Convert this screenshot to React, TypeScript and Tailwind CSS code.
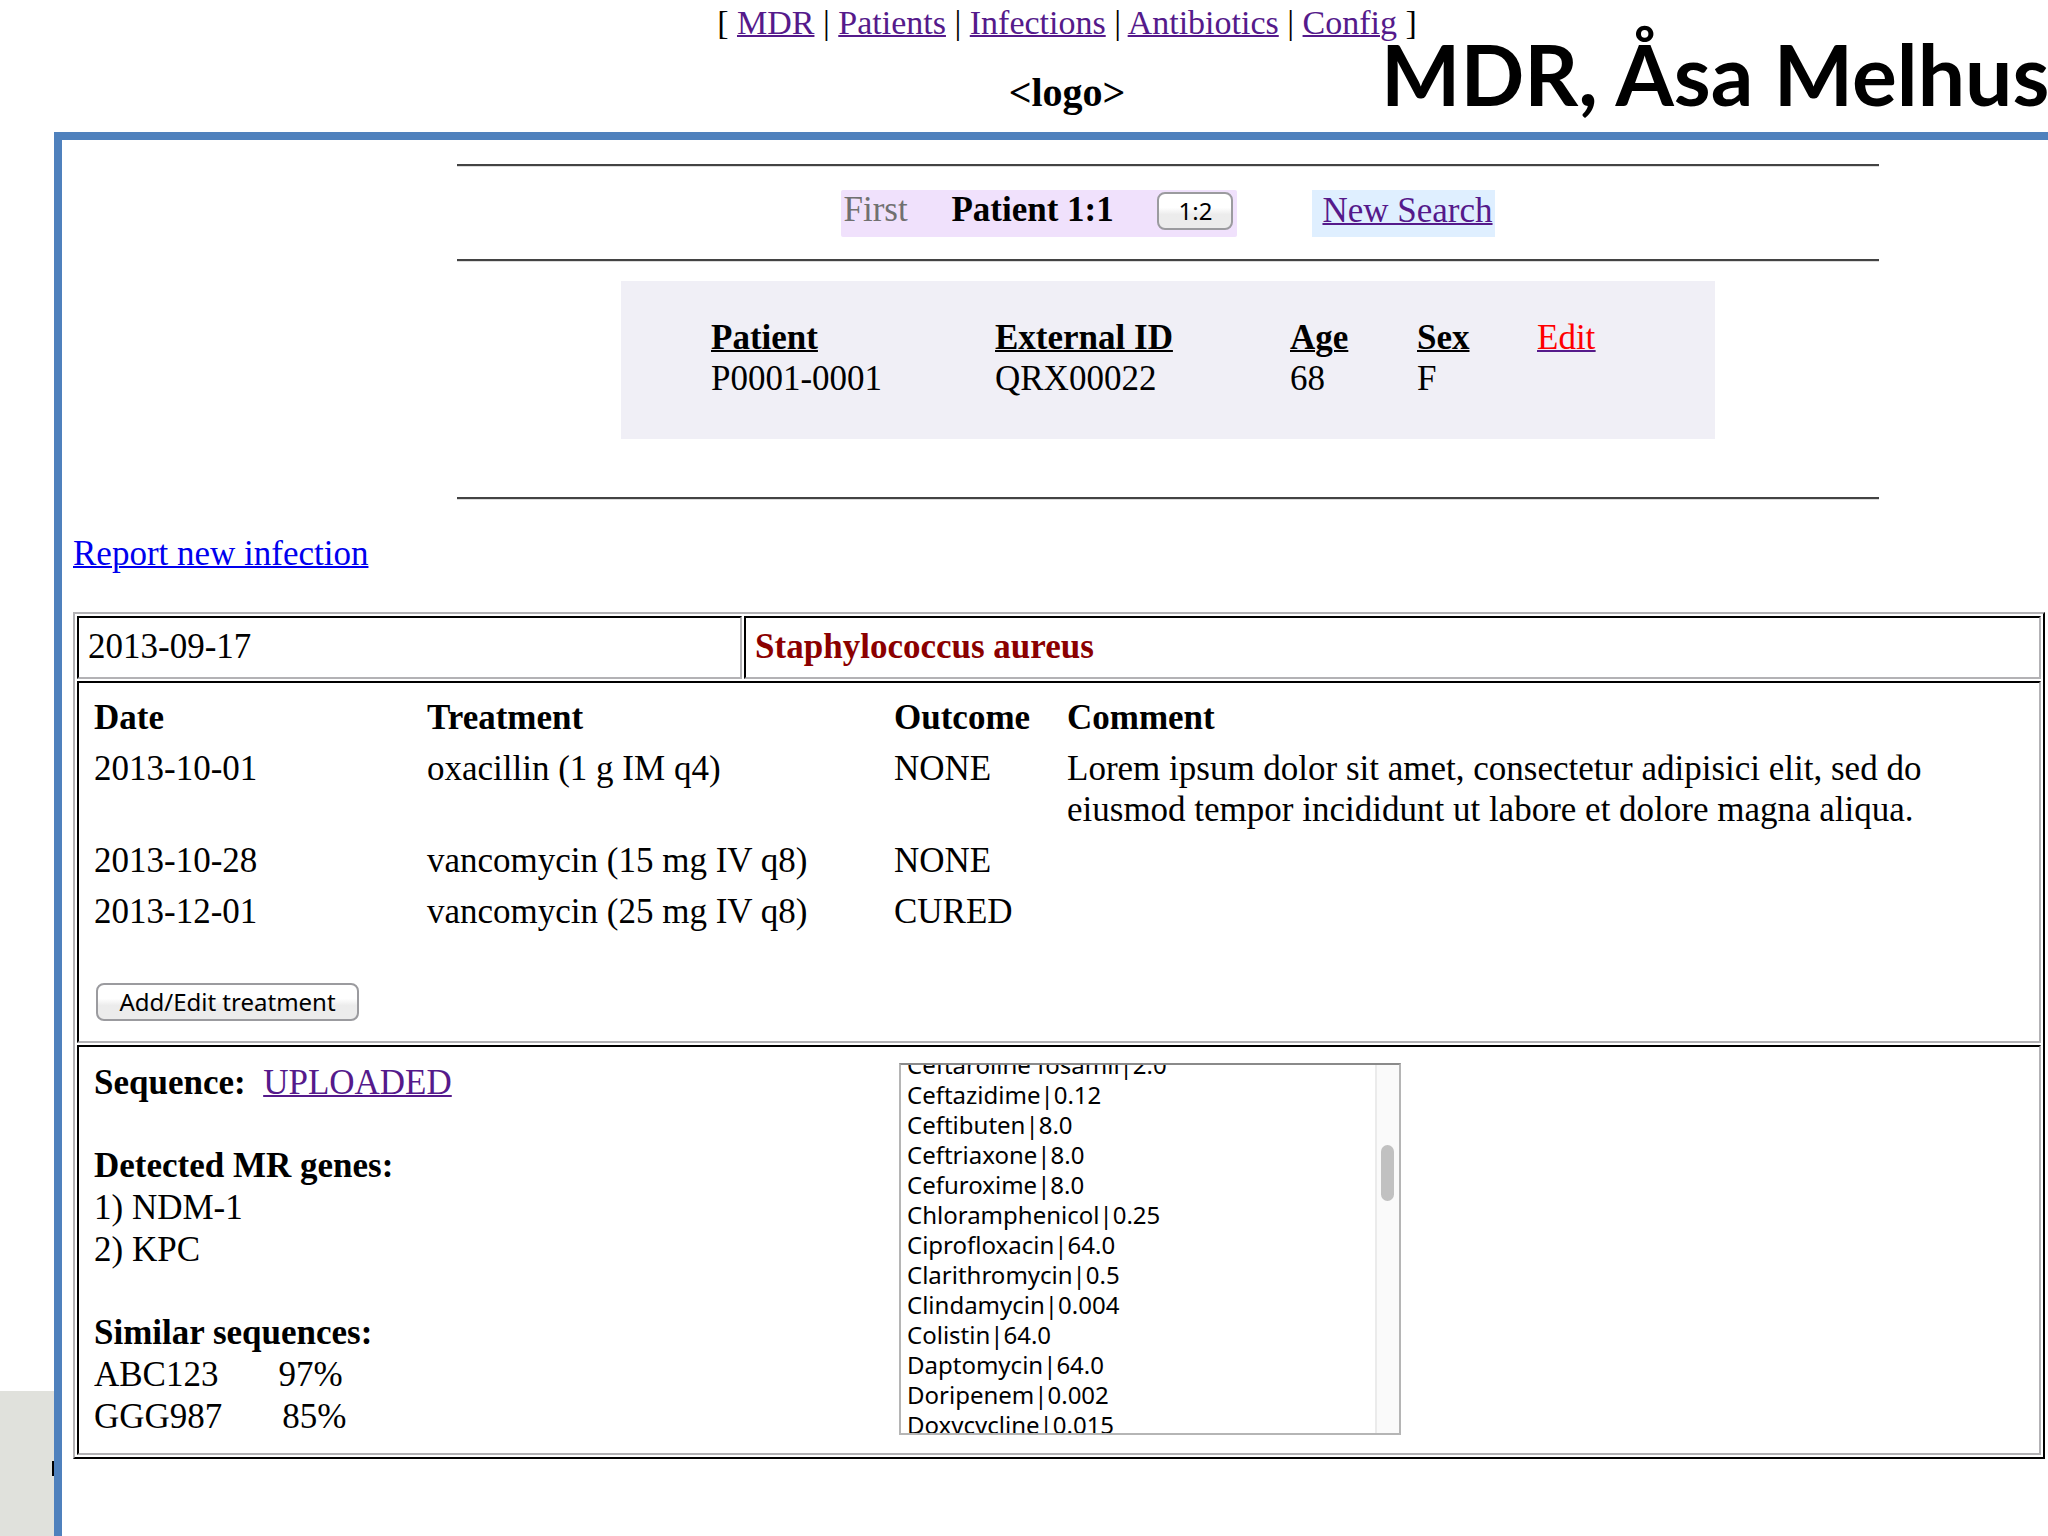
import { useEffect, useRef } from 'react';

const navLinks = ['MDR', 'Patients', 'Infections', 'Antibiotics', 'Config'];

const treatments = [
    {
        date: '2013-10-01',
        treatment: 'oxacillin (1 g IM q4)',
        outcome: 'NONE',
        comment: 'Lorem ipsum dolor sit amet, consectetur adipisici elit, sed do eiusmod tempor incididunt ut labore et dolore magna aliqua.'
    },
    { date: '2013-10-28', treatment: 'vancomycin (15 mg IV q8)', outcome: 'NONE', comment: '' },
    { date: '2013-12-01', treatment: 'vancomycin (25 mg IV q8)', outcome: 'CURED', comment: '' }
];

const antibiotics = [
    'Ceftaroline fosamil|2.0',
    'Ceftazidime|0.12',
    'Ceftibuten|8.0',
    'Ceftriaxone|8.0',
    'Cefuroxime|8.0',
    'Chloramphenicol|0.25',
    'Ciprofloxacin|64.0',
    'Clarithromycin|0.5',
    'Clindamycin|0.004',
    'Colistin|64.0',
    'Daptomycin|64.0',
    'Doripenem|0.002',
    'Doxycycline|0.015'
];

const similar = [
    { name: 'ABC123', match: '97%' },
    { name: 'GGG987', match: '85%' }
];

const cell = 'border-2 border-t-black border-l-black border-r-[#b3b2b5] border-b-[#b3b2b5] align-top';
const button = "h-[38px] rounded-lg border-2 border-[#9b9b9f] bg-linear-to-b from-white from-40% to-[#ececec] to-60% font-['Noto_Sans',sans-serif] text-[24px] leading-[32px]";

function Rule() {
    return <hr className="h-[3px] border-t-2 border-b border-t-[#434343] border-b-[#dcdcdc]" />;
}

function AntibioticList() {
    const ref = useRef<HTMLSelectElement>(null);

    useEffect(() => {
        if (ref.current) ref.current.scrollTop = 17;
    }, []);

    return (
        <div className="mt-px flex h-[372px] w-[502px] border-2 border-[#b5b5b5] border-t-[#8a8a8a]">
            <select
                ref={ref}
                size={13}
                aria-label="Antibiotics"
                className="h-full min-w-0 flex-1 overflow-y-scroll font-['Noto_Sans',sans-serif] text-[24px] outline-none [scrollbar-width:none]"
            >
                {antibiotics.map(a => (
                    <option key={a} className="h-[30px] py-0 pr-0 pl-[6px] leading-[30px]">{a}</option>
                ))}
            </select>
            <div className="w-6 border-l-2 border-[#ebebeb] bg-[#fafafa] pt-20 pl-1">
                <div className="h-14 w-[13px] rounded-full bg-[#c1c1c1]" />
            </div>
        </div>
    );
}

export default function App() {
    return (
        <div className="flex min-h-screen flex-col overflow-hidden bg-white font-['Liberation_Serif',serif] text-[35px] leading-[41px] text-black">
            {/* Header */}
            <header className="relative overflow-hidden pt-[2px] pb-[19px] pl-[86px] text-center">
                <nav className="text-[34px]">
                    [{' '}
                    {navLinks.map((link, i) => (
                        <span key={link}>
                            {i > 0 && ' | '}
                            <a href="#" className="text-[#551a8b] underline decoration-2">{link}</a>
                        </span>
                    ))}
                    {' '}]
                </nav>
                <p className="mt-[29px] text-[40px] font-bold">&lt;logo&gt;</p>
                <h1 className="absolute top-[35px] left-[1381px] font-['Lato',sans-serif] text-[84px] leading-[78px] font-bold whitespace-nowrap">MDR, Åsa Melhus</h1>
            </header>

            <div className="flex flex-1">
                <aside className="flex w-[54px] shrink-0 flex-col justify-end">
                    <div className="flex h-[145px] justify-end bg-[#e0e1dc] pt-[70px]">
                        <div className="h-[15px] w-[2px] bg-black" />
                    </div>
                </aside>

                <main className="min-w-0 flex-1 border-t-8 border-l-8 border-[#4f81bd] pt-6 pr-[3px] pl-[11px]">
                    {/* Patient navigation and summary */}
                    <section className="mr-[166px] ml-[384px]">
                        <Rule />
                        <div className="mt-[23px] mb-[22px] flex justify-center gap-[75px]">
                            <div className="flex h-[47px] w-[396px] justify-between rounded-xs bg-[#f0e1fc] pr-1 pl-[2px] leading-[39px]">
                                <span className="text-[#707070]">First</span>
                                <b>Patient 1:1</b>
                                <button className={`${button} mt-[2px] w-[76px]`}>1:2</button>
                            </div>
                            <div className="h-[47px] bg-[#dfefff] pr-[2px] pl-[10px]">
                                <a href="#" className="text-[#551a8b] underline decoration-2">New Search</a>
                            </div>
                        </div>
                        <Rule />
                        <div className="mx-auto mt-[19px] mb-[58px] w-[1094px] bg-[#f0eff6] pt-9 pb-10 pl-[90px]">
                            <table className="w-full table-fixed text-left">
                                <thead>
                                    <tr className="underline decoration-2">
                                        <th className="w-[284px]">Patient</th>
                                        <th className="w-[295px]">External ID</th>
                                        <th className="w-[127px]">Age</th>
                                        <th className="w-[120px]">Sex</th>
                                        <td className="no-underline">
                                            <a href="#" className="text-[#ff0000] underline decoration-[#551a8b] decoration-2">Edit</a>
                                        </td>
                                    </tr>
                                </thead>
                                <tbody>
                                    <tr>
                                        <td>P0001-0001</td>
                                        <td>QRX00022</td>
                                        <td>68</td>
                                        <td>F</td>
                                        <td />
                                    </tr>
                                </tbody>
                            </table>
                        </div>
                        <Rule />
                    </section>

                    <a href="#" className="mt-[33px] inline-block text-[#0000ee] underline decoration-2">Report new infection</a>

                    {/* Infection record */}
                    <table className="mt-[38px] w-full table-fixed border-separate border-spacing-[2px] border-2 border-t-[#b3b2b5] border-r-black border-b-black border-l-[#b3b2b5]">
                        <colgroup>
                            <col className="w-[33.9%]" />
                            <col />
                        </colgroup>
                        <tbody>
                            <tr>
                                <td className={`${cell} px-[9px] pt-2 pb-[10px]`}>2013-09-17</td>
                                <td className={`${cell} px-[9px] pt-2 pb-[10px] font-bold text-[#8b0000]`}>Staphylococcus aureus</td>
                            </tr>
                            <tr>
                                <td colSpan={2} className={`${cell} px-[15px] pt-[9px] pb-5`}>
                                    <table className="w-full table-fixed text-left">
                                        <thead>
                                            <tr>
                                                <th className="w-[333px] py-[5px]">Date</th>
                                                <th className="w-[467px]">Treatment</th>
                                                <th className="w-[173px]">Outcome</th>
                                                <th>Comment</th>
                                            </tr>
                                        </thead>
                                        <tbody>
                                            {treatments.map(t => (
                                                <tr key={t.date} className="align-top">
                                                    <td className="py-[5px]">{t.date}</td>
                                                    <td className="py-[5px]">{t.treatment}</td>
                                                    <td className="py-[5px]">{t.outcome}</td>
                                                    <td className="py-[5px] pr-10">{t.comment}</td>
                                                </tr>
                                            ))}
                                        </tbody>
                                    </table>
                                    <button className={`${button} mt-[46px] ml-[2px] block w-[263px]`}>Add/Edit treatment</button>
                                </td>
                            </tr>
                            <tr>
                                <td colSpan={2} className={`${cell} px-[15px] pt-[15px] pb-[15px]`}>
                                    <div className="flex leading-[42px]">
                                        <div className="w-[805px]">
                                            <p>
                                                <b>Sequence:</b>&nbsp;{' '}
                                                <a href="#" className="text-[#551a8b] underline decoration-2">UPLOADED</a>
                                            </p>
                                            <h2 className="mt-[41px] font-bold">Detected MR genes:</h2>
                                            <p>1) NDM-1</p>
                                            <p>2) KPC</p>
                                            <h2 className="mt-[41px] font-bold">Similar sequences:</h2>
                                            {similar.map(s => (
                                                <p key={s.name} className="flex gap-15">
                                                    <span>{s.name}</span>
                                                    <span>{s.match}</span>
                                                </p>
                                            ))}
                                        </div>
                                        <AntibioticList />
                                    </div>
                                </td>
                            </tr>
                        </tbody>
                    </table>
                </main>
            </div>
        </div>
    );
}
